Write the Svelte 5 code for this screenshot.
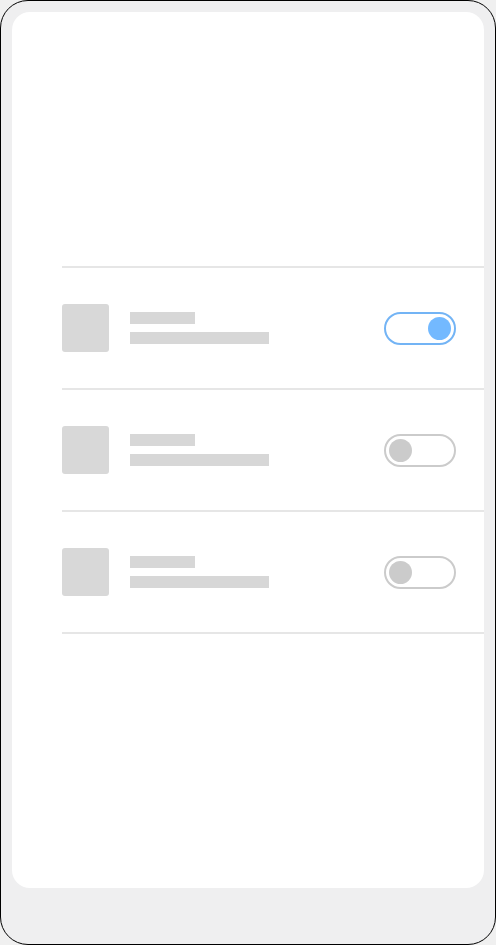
<script>
  let items = $state([
    { id: 'first', on: true },
    { id: 'second', on: false },
    { id: 'third', on: false }
  ]);
</script>

<div class="device">
  <main class="screen">
    <ul class="list">
      {#each items as item (item.id)}
        <li class="row">
          <span class="thumb"></span>
          <span class="lines">
            <span class="line short"></span>
            <span class="line"></span>
          </span>
          <label class="switch">
            <input type="checkbox" role="switch" aria-label={item.id} bind:checked={item.on} />
            <span class="knob"></span>
          </label>
        </li>
      {/each}
    </ul>
  </main>
</div>

<style>
  :global(body) {
    margin: 0;
    background: #f0f0f0;
    font-family: "Liberation Sans", Arial, sans-serif;
  }

  .device {
    box-sizing: border-box;
    display: flex;
    min-height: 100vh;
    padding: 11px 11px 56px;
    border: 1px solid #000;
    border-radius: 28px;
    background: #efeff0;
  }

  .screen {
    flex: 1;
    display: flex;
    flex-direction: column;
    justify-content: center;
    padding-left: 50px;
    border-radius: 18px;
    background: #fff;
  }

  .list {
    margin: 0;
    padding: 0;
    list-style: none;
    border-top: 2px solid #e6e6e6;
  }

  .row {
    display: flex;
    align-items: center;
    padding: 36px 28px 36px 0;
    border-bottom: 2px solid #e6e6e6;
  }

  .thumb {
    width: 47px;
    height: 48px;
    border-radius: 3px;
    background: #d8d8d8;
  }

  .lines {
    display: flex;
    flex-direction: column;
    gap: 8px;
    width: 139px;
    margin-left: 21px;
  }

  .line {
    height: 12px;
    background: #d7d7d7;
  }

  .short {
    width: 65px;
  }

  .switch {
    box-sizing: border-box;
    display: flex;
    align-items: center;
    position: relative;
    width: 72px;
    height: 33px;
    margin-left: auto;
    padding: 0 3px;
    border: 2px solid #cbcbcb;
    border-radius: 17px;
    background: #fff;
    cursor: pointer;
  }

  .switch input {
    position: absolute;
    inset: 0;
    width: 100%;
    height: 100%;
    margin: 0;
    opacity: 0;
    cursor: pointer;
  }

  .knob {
    width: 23px;
    height: 23px;
    border-radius: 50%;
    background: #cbcbcb;
  }

  .switch:has(input:checked) {
    justify-content: flex-end;
    border-color: #73b4f5;
  }

  input:checked + .knob {
    background: #73b9ff;
  }
</style>
